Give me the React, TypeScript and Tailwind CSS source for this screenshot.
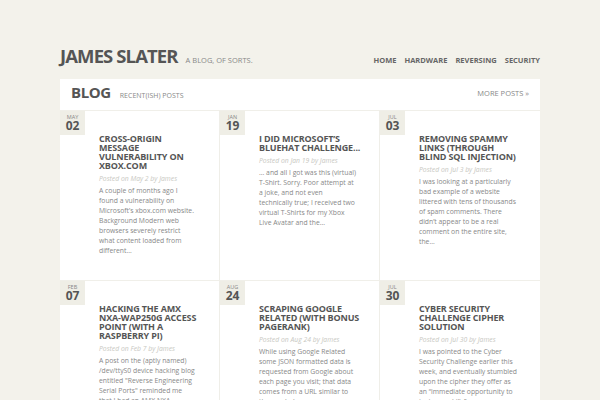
import React from 'react';

type Post = {
  month: string;
  day: string;
  title: string;
  posted: string;
  excerpt: string;
};

const posts: Post[] = [
  {
    month: 'MAY',
    day: '02',
    title: 'Cross-Origin Message Vulnerability on Xbox.com',
    posted: 'May 2',
    excerpt:
      'A couple of months ago I found a vulnerability on Microsoft’s xbox.com website. Background Modern web browsers severely restrict what content loaded from different…',
  },
  {
    month: 'JAN',
    day: '19',
    title: 'I did Microsoft’s BlueHat Challenge...',
    posted: 'Jan 19',
    excerpt:
      '... and all I got was this (virtual) T-Shirt. Sorry. Poor attempt at a joke, and not even technically true; I received two virtual T-Shirts for my Xbox Live Avatar and the…',
  },
  {
    month: 'JUL',
    day: '03',
    title: 'Removing Spammy Links (through Blind SQL Injection)',
    posted: 'Jul 3',
    excerpt:
      'I was looking at a particularly bad example of a website littered with tens of thousands of spam comments. There didn’t appear to be a real comment on the entire site, the…',
  },
  {
    month: 'FEB',
    day: '07',
    title: 'Hacking the AMX NXA-WAP250G Access Point (with a Raspberry Pi)',
    posted: 'Feb 7',
    excerpt:
      'A post on the (aptly named) /dev/ttyS0 device hacking blog entitled "Reverse Engineering Serial Ports" reminded me that I had an AMX NXA-WAP250G lying around…',
  },
  {
    month: 'AUG',
    day: '24',
    title: 'Scraping Google Related (with bonus PageRank)',
    posted: 'Aug 24',
    excerpt:
      'While using Google Related some JSON formatted data is requested from Google about each page you visit; that data comes from a URL similar to the one below…',
  },
  {
    month: 'JUL',
    day: '30',
    title: 'Cyber Security Challenge Cipher Solution',
    posted: 'Jul 30',
    excerpt:
      'I was pointed to the Cyber Security Challenge earlier this week, and eventually stumbled upon the cipher they offer as an “immediate opportunity to test your skills”…',
  },
];

function PostCard({ post, last }: { post: Post; last: boolean }) {
  return (
    <div
      className={`relative h-[170px] overflow-hidden border-t border-[#f0efe9] ${last ? '' : 'border-r border-r-[#efeee8]'}`}
    >
      {/* date tab */}
      <div className="absolute left-0 top-0 flex h-[24px] w-[25px] flex-col items-center bg-[#efeee6] pt-[3px]">
        <span className="text-[5.5px] leading-[6px] text-[#888]">{post.month}</span>
        <span className="text-[12px] font-bold leading-[12px] text-[#555]">{post.day}</span>
      </div>

      <div className="pl-[39px] pr-[17px] pt-[23px]">
        <h2 className="text-[9px] font-bold uppercase leading-[9px] tracking-[-0.15px] text-[#555]">
          {post.title}
        </h2>
        <p className="mt-[4px] text-[6.8px] italic leading-[9px] text-[#c8c8c2]">
          Posted on {post.posted} by James
        </p>
        <p className="mt-[3px] pr-[6px] text-[6.8px] leading-[10px] text-[#888]">{post.excerpt}</p>
      </div>
    </div>
  );
}

export default function App() {
  return (
    <div
      className="h-[400px] w-[600px] overflow-hidden bg-[#f3f2eb]"
      style={{ fontFamily: '"Open Sans", "DejaVu Sans", sans-serif' }}
    >
      {/* Site header */}
      <div className="mx-[60px] flex h-[79px] items-end justify-between pb-[13px]">
        <div className="flex items-baseline gap-[8px]">
          <h1 className="text-[18.5px] font-bold leading-none tracking-[-0.9px] text-[#555]">
            JAMES SLATER
          </h1>
          <span className="text-[7.5px] text-[#888]">A BLOG, OF SORTS.</span>
        </div>
        <nav className="flex gap-[8px] pb-[2px] text-[7.5px] font-bold leading-none text-[#666]">
          <a>HOME</a>
          <a>HARDWARE</a>
          <a>REVERSING</a>
          <a>SECURITY</a>
        </nav>
      </div>

      {/* Blog panel */}
      <div className="mx-[60px] bg-white">
        <div className="flex h-[31px] items-center justify-between px-[11px] pb-[2px]">
          <div className="flex items-baseline gap-[9px]">
            <h2 className="text-[15px] font-bold leading-none tracking-[-0.4px] text-[#555]">BLOG</h2>
            <span className="text-[7px] text-[#888]">RECENT(ISH) POSTS</span>
          </div>
          <a className="text-[7.5px] text-[#888]">MORE POSTS »</a>
        </div>
        <div className="grid grid-cols-3">
          {posts.map((p, i) => (
            <PostCard key={i} post={p} last={i % 3 === 2} />
          ))}
        </div>
      </div>
    </div>
  );
}
